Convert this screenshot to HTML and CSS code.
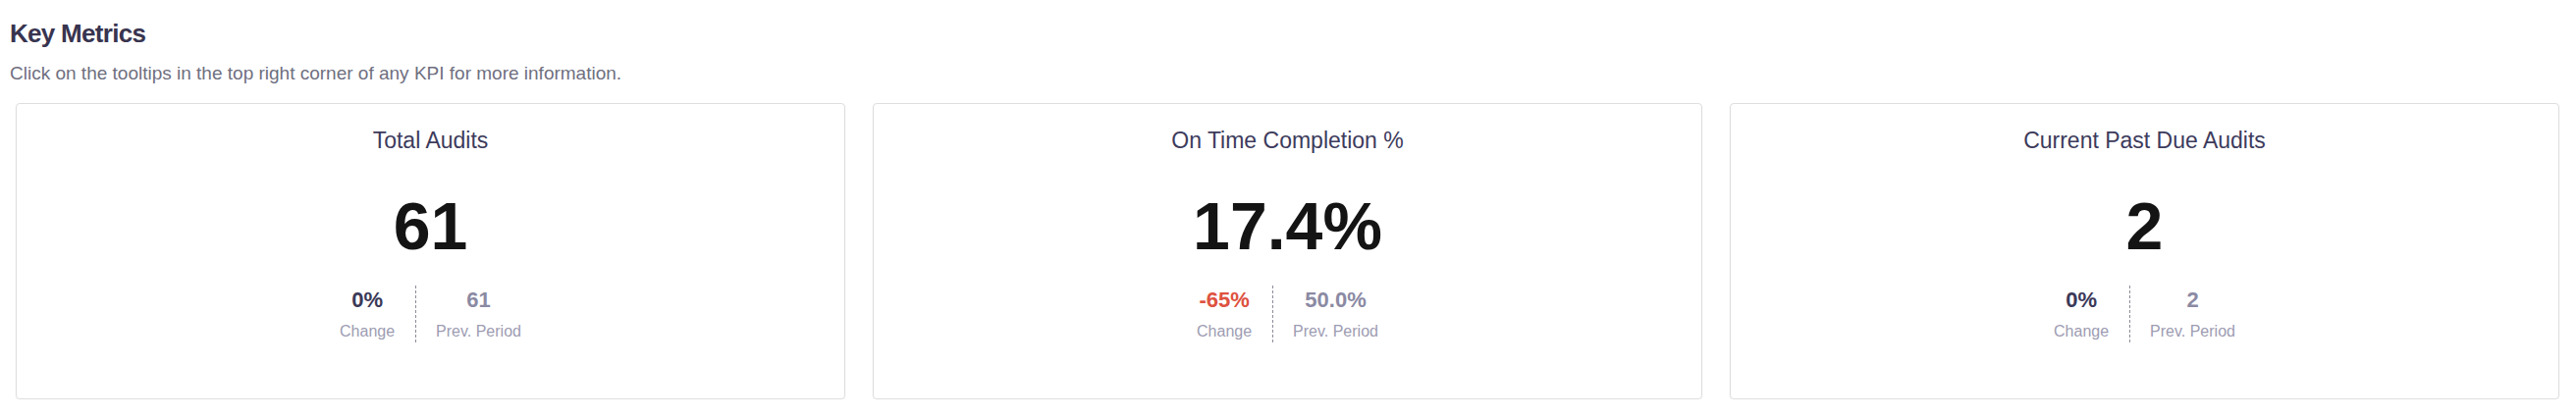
FILE: index.html
```html
<!DOCTYPE html>
<html lang="en">
<head>
<meta charset="utf-8">
<title>Key Metrics</title>
<link rel="stylesheet" href="styles.css">
</head>
<body>
<section class="metrics">
  <h2 class="metrics-title">Key Metrics</h2>
  <p class="metrics-sub">Click on the tooltips in the top right corner of any KPI for more information.</p>
  <div class="kpi-grid">
    <div class="kpi-card">
      <div class="kpi-name">Total Audits</div>
      <div class="kpi-value">61</div>
      <div class="kpi-compare">
        <div class="kpi-stat">
          <div class="stat-val stat-change">0%</div>
          <div class="stat-label">Change</div>
        </div>
        <div class="kpi-stat kpi-stat-prev">
          <div class="stat-val stat-prev">61</div>
          <div class="stat-label">Prev. Period</div>
        </div>
      </div>
    </div>
    <div class="kpi-card">
      <div class="kpi-name">On Time Completion %</div>
      <div class="kpi-value">17.4%</div>
      <div class="kpi-compare">
        <div class="kpi-stat">
          <div class="stat-val stat-change stat-neg">-65%</div>
          <div class="stat-label">Change</div>
        </div>
        <div class="kpi-stat kpi-stat-prev">
          <div class="stat-val stat-prev">50.0%</div>
          <div class="stat-label">Prev. Period</div>
        </div>
      </div>
    </div>
    <div class="kpi-card">
      <div class="kpi-name">Current Past Due Audits</div>
      <div class="kpi-value">2</div>
      <div class="kpi-compare">
        <div class="kpi-stat">
          <div class="stat-val stat-change">0%</div>
          <div class="stat-label">Change</div>
        </div>
        <div class="kpi-stat kpi-stat-prev">
          <div class="stat-val stat-prev">2</div>
          <div class="stat-label">Prev. Period</div>
        </div>
      </div>
    </div>
  </div>
</section>
</body>
</html>
```

FILE: styles.css
```css
html, body {
  margin: 0;
  padding: 0;
  background: #ffffff;
}

body {
  font-family: "Liberation Sans", Arial, sans-serif;
}

.metrics {
  padding: 19px 17px 0 10px;
}

.metrics-title {
  margin: 0;
  font-size: 26px;
  line-height: 30px;
  font-weight: bold;
  letter-spacing: -0.7px;
  color: #38344f;
}

.metrics-sub {
  margin: 15px 0 0 0;
  font-size: 19px;
  line-height: 22px;
  color: #6f6f80;
}

.kpi-grid {
  display: grid;
  grid-template-columns: repeat(3, 1fr);
  gap: 28px;
  margin: 19px 0 0 6px;
}

.kpi-card {
  border: 1px solid #dedede;
  border-radius: 4px;
  box-shadow: 0 1px 2px rgba(0, 0, 0, 0.06);
  padding: 24px 10px 56px;
  display: flex;
  flex-direction: column;
  align-items: center;
}

.kpi-name {
  font-size: 23px;
  line-height: 26px;
  color: #3d3b5c;
}

.kpi-value {
  margin-top: 40px;
  font-size: 68px;
  line-height: 68px;
  font-weight: bold;
  color: #141414;
}

.kpi-compare {
  margin-top: 27px;
  display: flex;
  align-items: stretch;
}

.kpi-stat {
  display: flex;
  flex-direction: column;
  align-items: center;
  padding: 2px 21px 2px;
}

.kpi-stat-prev {
  background-image: linear-gradient(to bottom, #8c8c9a 0, #8c8c9a 60%, transparent 60%);
  background-size: 1px 5px;
  background-repeat: repeat-y;
  background-position: left top;
}

.stat-val {
  font-size: 22px;
  line-height: 26px;
  font-weight: bold;
}

.stat-change {
  color: #3b3958;
}

.stat-neg {
  color: #de5240;
}

.stat-prev {
  color: #8b8aa3;
}

.stat-label {
  margin-top: 9px;
  font-size: 16px;
  line-height: 20px;
  color: #9d9cb2;
}
```
